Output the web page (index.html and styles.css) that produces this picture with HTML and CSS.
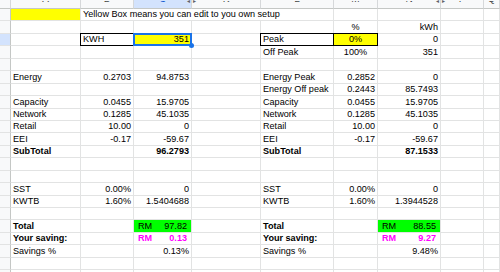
FILE: index.html
```html
<!DOCTYPE html>
<html>
<head>
<meta charset="utf-8">
<title>Tariff sheet</title>
<link rel="stylesheet" href="styles.css">
</head>
<body>
<table class="sheet">
  <colgroup>
    <col class="w-g"><col class="w-a"><col class="w-b"><col class="w-c"><col class="w-k"><col class="w-l"><col class="w-m"><col class="w-n"><col class="w-p"><col class="w-q">
  </colgroup>
  <thead>
    <tr class="hr">
      <th class="corner"></th>
      <th><div class="hd">A</div></th>
      <th><div class="hd">B</div></th>
      <th class="hsel hide-r"><div class="hd">C</div><span class="arr arr-l">◂</span></th>
      <th class="hide-l"><span class="arr arr-r">▸</span><div class="hd">K</div></th>
      <th><div class="hd">L</div></th>
      <th><div class="hd">M</div></th>
      <th class="hide-r"><div class="hd">N</div><span class="arr arr-l">◂</span></th>
      <th class="hide-l"><span class="arr arr-r">▸</span><div class="hd">P</div></th>
      <th><div class="hd">Q</div></th>
    </tr>
  </thead>
  <tbody>
    <tr class="r">
      <td class="gut"></td><td class="yel"></td>
      <td colspan="4" class="txt">Yellow Box means you can edit to you own setup</td>
      <td></td><td></td><td></td><td></td>
    </tr>
    <tr class="r">
      <td class="gut"></td><td></td><td></td><td></td><td></td><td></td>
      <td class="ctr">%</td><td class="num">kWh</td><td></td><td></td>
    </tr>
    <tr class="r">
      <td class="gut gsel"></td><td></td>
      <td class="txt box">KWH</td>
      <td class="num yel selc">351</td>
      <td></td>
      <td class="txt box">Peak</td>
      <td class="ctr yel box">0%</td>
      <td class="num">0</td><td></td><td></td>
    </tr>
    <tr class="r">
      <td class="gut"></td><td></td><td></td><td></td><td></td>
      <td class="txt">Off Peak</td><td class="ctr">100%</td><td class="num">351</td><td></td><td></td>
    </tr>
    <tr class="r">
      <td class="gut"></td><td></td><td></td><td></td><td></td><td></td><td></td><td></td><td></td><td></td>
    </tr>
    <tr class="r">
      <td class="gut"></td><td class="txt">Energy</td><td class="num">0.2703</td><td class="num">94.8753</td><td></td>
      <td class="txt">Energy Peak</td><td class="num">0.2852</td><td class="num">0</td><td></td><td></td>
    </tr>
    <tr class="r">
      <td class="gut"></td><td></td><td></td><td></td><td></td>
      <td class="txt">Energy Off peak</td><td class="num">0.2443</td><td class="num">85.7493</td><td></td><td></td>
    </tr>
    <tr class="r">
      <td class="gut"></td><td class="txt">Capacity</td><td class="num">0.0455</td><td class="num">15.9705</td><td></td>
      <td class="txt">Capacity</td><td class="num">0.0455</td><td class="num">15.9705</td><td></td><td></td>
    </tr>
    <tr class="r">
      <td class="gut"></td><td class="txt">Network</td><td class="num">0.1285</td><td class="num">45.1035</td><td></td>
      <td class="txt">Network</td><td class="num">0.1285</td><td class="num">45.1035</td><td></td><td></td>
    </tr>
    <tr class="r">
      <td class="gut"></td><td class="txt">Retail</td><td class="num">10.00</td><td class="num">0</td><td></td>
      <td class="txt">Retail</td><td class="num">10.00</td><td class="num">0</td><td></td><td></td>
    </tr>
    <tr class="r">
      <td class="gut"></td><td class="txt">EEI</td><td class="num">-0.17</td><td class="num">-59.67</td><td></td>
      <td class="txt">EEI</td><td class="num">-0.17</td><td class="num">-59.67</td><td></td><td></td>
    </tr>
    <tr class="r">
      <td class="gut"></td><td class="txt b">SubTotal</td><td></td><td class="num b">96.2793</td><td></td>
      <td class="txt b">SubTotal</td><td></td><td class="num b">87.1533</td><td></td><td></td>
    </tr>
    <tr class="r">
      <td class="gut"></td><td></td><td></td><td></td><td></td><td></td><td></td><td></td><td></td><td></td>
    </tr>
    <tr class="r">
      <td class="gut"></td><td></td><td></td><td></td><td></td><td></td><td></td><td></td><td></td><td></td>
    </tr>
    <tr class="r">
      <td class="gut"></td><td class="txt">SST</td><td class="num">0.00%</td><td class="num">0</td><td></td>
      <td class="txt">SST</td><td class="num">0.00%</td><td class="num">0</td><td></td><td></td>
    </tr>
    <tr class="r">
      <td class="gut"></td><td class="txt">KWTB</td><td class="num">1.60%</td><td class="num">1.5404688</td><td></td>
      <td class="txt">KWTB</td><td class="num">1.60%</td><td class="num">1.3944528</td><td></td><td></td>
    </tr>
    <tr class="r">
      <td class="gut"></td><td></td><td></td><td></td><td></td><td></td><td></td><td></td><td></td><td></td>
    </tr>
    <tr class="r">
      <td class="gut"></td><td class="txt b">Total</td><td></td>
      <td class="acc green"><span class="accin"><span>RM</span><span>97.82</span></span></td><td></td>
      <td class="txt b">Total</td><td></td>
      <td class="acc green"><span class="accin"><span>RM</span><span>88.55</span></span></td><td></td><td></td>
    </tr>
    <tr class="r">
      <td class="gut"></td><td class="txt b">Your saving:</td><td></td>
      <td class="acc mag"><span class="accin"><span>RM</span><span>0.13</span></span></td><td></td>
      <td class="txt b">Your saving:</td><td></td>
      <td class="acc mag"><span class="accin"><span>RM</span><span>9.27</span></span></td><td></td><td></td>
    </tr>
    <tr class="r">
      <td class="gut"></td><td class="txt">Savings %</td><td></td><td class="num">0.13%</td><td></td>
      <td class="txt">Savings %</td><td></td><td class="num">9.48%</td><td></td><td></td>
    </tr>
    <tr class="r">
      <td class="gut"></td><td></td><td></td><td></td><td></td><td></td><td></td><td></td><td></td><td></td>
    </tr>
    <tr class="r">
      <td class="gut"></td><td></td><td></td><td></td><td></td><td></td><td></td><td></td><td></td><td></td>
    </tr>
  </tbody>
</table>
</body>
</html>
```

FILE: styles.css
```css
html, body {
  margin: 0;
  padding: 0;
  background: #ffffff;
}
body {
  width: 500px;
  height: 272px;
  overflow: hidden;
  font-family: "Liberation Sans", Arial, sans-serif;
  font-size: 9.1px;
  color: #000000;
}
.sheet {
  border-collapse: separate;
  border-spacing: 0;
  table-layout: fixed;
  width: 500px;
}
.w-g { width: 11px; }
.w-a { width: 70px; }
.w-b { width: 53px; }
.w-c { width: 58px; }
.w-k { width: 69px; }
.w-l { width: 73px; }
.w-m { width: 44px; }
.w-n { width: 63px; }
.w-p { width: 43px; }
.w-q { width: 16px; }

/* column header strip (scrolled partly out of view) */
.hr { height: 8px; }
.hr th {
  position: relative;
  padding: 0;
  height: 8px;
  background: #f8f9fa;
  border-right: 1px solid #d6d8da;
  border-bottom: 1px solid #c4c7c5;
  font-weight: normal;
  color: #444746;
  font-size: 10px;
}
.hd {
  height: 7px;
  overflow: hidden;
  display: flex;
  align-items: flex-end;
  justify-content: center;
  line-height: 10px;
  padding-bottom: 4px;
  box-sizing: border-box;
}
.hr th.hsel {
  background: #d3e3fd;
  color: #0b57d0;
}
.arr {
  position: absolute;
  bottom: 4px;
  font-size: 6px;
  line-height: 6px;
  color: #5f6368;
}
.arr-l { right: 1px; }
.arr-r { left: 1px; }

/* body rows */
.r { height: 12.45px; }
.r td {
  padding: 0 2px;
  border-right: 1px solid #e2e3e3;
  border-bottom: 1px solid #e2e3e3;
  line-height: 11px;
  vertical-align: bottom;
  white-space: nowrap;
  overflow: visible;
}
.r td.gut {
  padding: 0;
  background: #f8f9fa;
  border-right: 1px solid #c4c7c5;
}
.r td.gsel { background: #d3e3fd; }

.txt { text-align: left; }
.num { text-align: right; }
.ctr { text-align: center; }
.b { font-weight: bold; }

.yel { background: #ffff00; }
.green { background: #00ff00; }
.mag { color: #ff00ff; font-weight: bold; }

.box { position: relative; }
.box::after {
  content: "";
  position: absolute;
  inset: -1px;
  border: 1px solid #000000;
  pointer-events: none;
}

.selc { position: relative; }
.selc::after {
  content: "";
  position: absolute;
  inset: -1px;
  border: 2px solid #1a73e8;
  pointer-events: none;
}
.selc::before {
  content: "";
  position: absolute;
  right: -3px;
  bottom: -3px;
  width: 5px;
  height: 5px;
  border-radius: 50%;
  background: #1a73e8;
  z-index: 2;
}

.r td.acc { padding: 0 4px 0 4px; }
.accin {
  display: flex;
  justify-content: space-between;
}
```
